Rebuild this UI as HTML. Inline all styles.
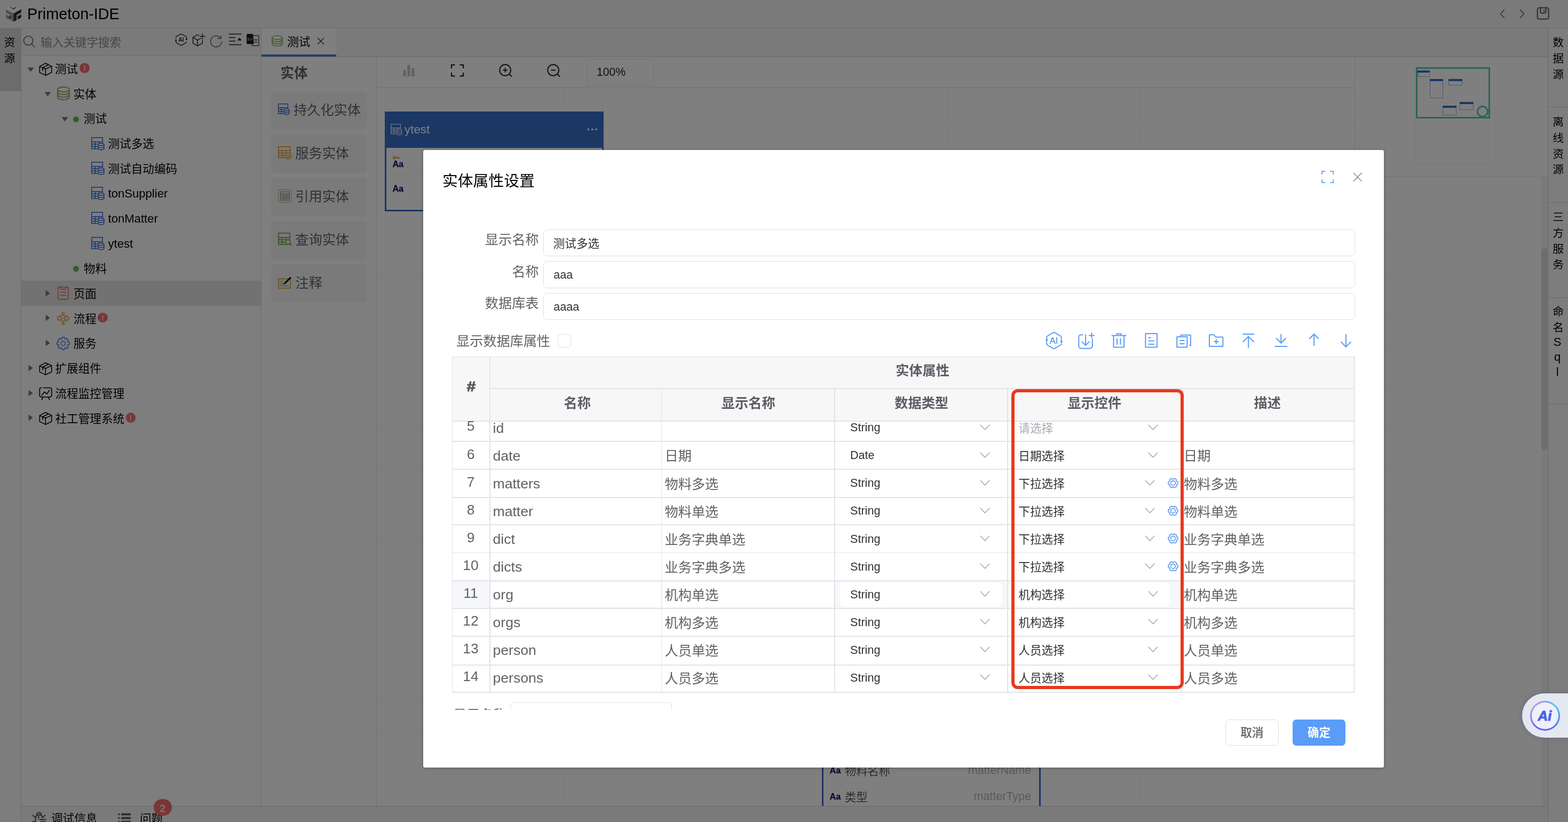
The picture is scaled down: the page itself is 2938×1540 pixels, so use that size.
<!DOCTYPE html>
<html lang="zh-CN">
<head>
<meta charset="utf-8">
<title>Primeton-IDE</title>
<style>
*{box-sizing:border-box;margin:0;padding:0}
html,body{width:2938px;height:1540px;overflow:hidden;background:#fff}
body{position:relative;font-family:"Liberation Sans","Noto Sans CJK SC",sans-serif;color:#000;-webkit-font-smoothing:antialiased}
#app{position:absolute;left:0;top:0;width:2938px;height:1540px;overflow:hidden;background:#fff}
#mask{position:absolute;left:0;top:0;width:2938px;height:1540px;background:rgba(0,0,0,.5)}
.t{position:absolute;white-space:nowrap}
.r{position:absolute}
.ic{position:absolute;display:block;overflow:visible}
#modal{position:absolute;left:793px;top:281px;width:1800px;height:1157px;background:#fff;border-radius:3.5px;overflow:hidden;box-shadow:0 1px 7px rgba(0,0,0,.28)}
#mc{position:absolute;left:0;top:0;width:2938px;height:1540px}
#app,#mc{will-change:transform}
.vt{position:absolute;writing-mode:vertical-rl;text-orientation:upright;font-size:20.8px;letter-spacing:8.9px;line-height:37px;white-space:nowrap;color:#000}
.vl{font-size:22px;letter-spacing:3px;margin-top:-4px}

</style>
</head>
<body>
<div id="app">
<div class="r" style="left:0px;top:0px;width:2938px;height:52px;background:#f5f5f5;"></div><div class="r" style="left:0px;top:52px;width:2938px;height:1px;background:#d9d9d9;"></div><svg class="ic" style="left:0px;top:0px" width="52" height="52" viewBox="0 0 52 52" fill="none" ><path d="M11 17.5 L25 9.6 L39.7 17.3 L25.4 25.2 Z" fill="#fdfdfd"/><path d="M19.1 12.1 L25 15.4 L25.2 18.1 L19.1 14.3 Z" fill="#8a8a8a"/><path d="M25 15.4 L30.8 12.7 L30.8 14.1 L25.2 18.1 Z" fill="#585858"/><path d="M11 17.5 L25.4 25.2 L25.4 40.8 L20 37.9 L20 28.5 L11 23.5 Z" fill="#a0a0a0"/><path d="M25.4 25.2 L39.7 17.3 L39.7 23.5 L30.8 28.3 L30.8 37.9 L25.4 40.8 Z" fill="#303030"/><path d="M11 27 L16.9 30 L16.9 36.6 L11 33.5 Z" fill="#a2a2a2"/><path d="M16.9 30 L20 28.5 L20 34.9 L16.9 36.6 Z" fill="#5c5c5c"/><path d="M31.2 28.7 L33.9 30 L33.9 36.2 L31.2 37.6 Z" fill="#a8a8a8"/><path d="M33.9 30 L39.7 27 L39.7 33.1 L33.9 36.2 Z" fill="#262626"/></svg><div class="t" style="top:6.00px;font-size:28.8px;line-height:40px;color:#000;left:51px;">Primeton-IDE</div><svg class="ic" style="left:2805px;top:12px" width="20" height="28" viewBox="2805 12 20 28" fill="none"><path d="M2818.4 18.6 L2811.7 25.9 L2818.4 33.2" stroke="#5e5e5e" stroke-width="1.5" stroke-linecap="square"/></svg><svg class="ic" style="left:2842px;top:12px" width="20" height="28" viewBox="2842 12 20 28" fill="none"><path d="M2848.7 18.6 L2855.4 25.9 L2848.7 33.2" stroke="#5e5e5e" stroke-width="1.5" stroke-linecap="square"/></svg><svg class="ic" style="left:2876px;top:10px" width="30" height="30" viewBox="2876 10 30 30" fill="none"><rect x="2880.7" y="14.5" width="21" height="21.3" rx="3.6" stroke="#5a5a5a" stroke-width="2.1"/><path d="M2886.3 14.6 V21.6 C2886.3 23.3 2887.6 24.6 2889.3 24.6 H2893.5 C2895.2 24.6 2896.5 23.3 2896.5 21.6 V14.6" stroke="#5a5a5a" stroke-width="2.1"/><path d="M2892.9 18.3 V21.4" stroke="#5a5a5a" stroke-width="1.7" stroke-linecap="round"/></svg><div class="r" style="left:0px;top:53px;width:39px;height:1487px;background:#fafafa;"></div><div class="r" style="left:0px;top:53px;width:39px;height:118px;background:#d8d8d8;"></div><div class="vt" style="left:-2.0px;top:68.6px">资源</div><div class="r" style="left:39px;top:53px;width:1px;height:1487px;background:#d4d4d4;"></div><div class="r" style="left:40px;top:53px;width:449px;height:1457px;background:#fcfcfc;"></div><div class="r" style="left:40px;top:53px;width:449px;height:51px;background:#f5f5f5;"></div><div class="r" style="left:40px;top:104px;width:449px;height:1px;background:#d9d9d9;"></div><div class="r" style="left:489px;top:53px;width:1px;height:1457px;background:#d4d4d4;"></div><svg class="ic" style="left:43px;top:66px" width="23" height="23" viewBox="0 0 23 23" fill="none" ><circle cx="10" cy="10" r="8.6" stroke="#5a5a5a" stroke-width="1.5"/><path d="M16.2 16.4 L22 22.2" stroke="#5a5a5a" stroke-width="1.5" stroke-linecap="round"/></svg><div class="t" style="top:63.80px;font-size:21.6px;line-height:32px;color:#8c8c8c;left:76px;">输入关键字搜索</div><svg class="ic" style="left:325px;top:58px" width="30" height="34" viewBox="325 58 30 34" fill="none"><g stroke="#222" stroke-width="1.35" stroke-linecap="round" stroke-linejoin="round"><path d="M329.8 71.4 V69.9 C329.8 69.2 330.2 68.6 330.8 68.2 L338.5 63.8 C339.1 63.4 339.9 63.4 340.5 63.8 L348.2 68.2 C348.8 68.6 349.2 69.2 349.2 69.9 V73.4"/><path d="M349.2 78.2 V78.6 C349.2 79.3 348.8 79.9 348.2 80.3 L340.5 84.7 C339.9 85.1 339.1 85.1 338.5 84.7 L330.8 80.3 C330.2 79.9 329.8 79.3 329.8 78.6 V75.4"/></g><circle cx="329.5" cy="75.3" r="1.5" fill="#222"/><circle cx="349.6" cy="73.6" r="1.5" fill="#222"/><text x="339.4" y="78.1" font-size="10.4" font-weight="700" text-anchor="middle" fill="#222" font-family="Liberation Sans, sans-serif">AI</text></svg><svg class="ic" style="left:358px;top:60px" width="30" height="30" viewBox="358 60 30 30" fill="none"><g stroke="#222" stroke-width="1.4" stroke-linecap="round" stroke-linejoin="round"><path d="M372.6 66.4 L370 65 L361.6 69.9 V81.2 L370 85.8 L379.4 80.9 V75.6"/><path d="M361.6 69.9 L370 75.2 L376 71.9"/><path d="M370 75.2 V85.8"/><path d="M374.4 68.3 H384"/><path d="M379.2 63.4 V73.4"/></g></svg><svg class="ic" style="left:392px;top:62px" width="28" height="30" viewBox="392 62 28 30" fill="none"><g stroke="#555" stroke-width="1.35" stroke-linecap="round" stroke-linejoin="round"><path d="M412.5 70.4 A10.4 10.4 0 1 0 415.3 78.3"/><path d="M414.1 67.4 V72.2 H408.4"/></g></svg><svg class="ic" style="left:427px;top:60px" width="28" height="28" viewBox="427 60 28 28" fill="none"><g stroke="#222" stroke-width="1.55"><path d="M429 63.7 H452.2"/><path d="M429 70.5 H441"/><path d="M429 77 H441"/><path d="M429 83.7 H452.2"/></g><path d="M445.3 75.4 L448.6 71.3 Q448.8 71.1 449 71.3 L452.2 75.4 Z" fill="#222" stroke="#222" stroke-width="0.8" stroke-linejoin="round"/></svg><svg class="ic" style="left:460px;top:60px" width="28" height="30" viewBox="460 60 28 30" fill="none"><rect x="472.4" y="66.6" width="12.4" height="19" stroke="#333" stroke-width="1.2"/><text x="479.3" y="80.4" font-size="8.6" text-anchor="middle" fill="#333" font-family="Noto Sans CJK SC, sans-serif">文</text><path d="M462.2 65 C462.2 64.1 462.9 63.4 463.8 63.4 H472.6 C473.3 63.4 473.9 63.9 474 64.6 L475.6 80.6 C475.7 81.7 474.9 82.6 473.8 82.6 H463.8 C462.9 82.6 462.2 81.9 462.2 81 Z" fill="#1c1c1c"/><text x="468.6" y="76" font-size="7.6" text-anchor="middle" fill="#d8d8d8" font-family="Liberation Sans, sans-serif">En</text></svg><div class="r" style="left:40px;top:526.0300000000001px;width:449px;height:46.8px;background:#e4e4e4;"></div><svg class="ic" style="left:51px;top:125.5px" width="13" height="9" viewBox="0 0 13 9" fill="none" ><path d="M0.4 0.6 H12.6 L6.5 8.6 Z" fill="#777"/></svg><svg class="ic" style="left:70px;top:113.5px" width="30" height="30" viewBox="0 0 30 30" fill="none" ><g stroke="#000" stroke-width="1.5" stroke-linejoin="round" stroke-linecap="round" transform="translate(0,0)"><path d="M15.3 4.5 L26.7 10.1 V21.8 L15.3 27.2 L4.3 21.8 V10.6 Z"/><path d="M4.3 10.6 L15.3 15.2 L26.7 10.1"/><path d="M15.3 15.2 V27.2"/><path d="M20.9 7.3 L9.9 12.9 V17.9" stroke-width="1.7"/></g></svg><div class="t" style="top:113.80px;font-size:21.6px;line-height:32px;color:#000;left:103.0px;">测试</div><div class="r" style="left:149.1px;top:118.2px;width:18.6px;height:18.6px;border-radius:50%;background:#f56c6c"></div><div class="t" style="top:118.20px;font-size:13.6px;line-height:19px;color:#f3d6d6;left:149.1px;font-weight:700;width:18.6px;text-align:center;-webkit-text-stroke:0.3px #f3d6d6;">!</div><svg class="ic" style="left:83px;top:172.27px" width="13" height="9" viewBox="0 0 13 9" fill="none" ><path d="M0.4 0.6 H12.6 L6.5 8.6 Z" fill="#777"/></svg><svg class="ic" style="left:106.5px;top:162.27px" width="24" height="26" viewBox="0 0 24 24" fill="none" preserveAspectRatio="none"><g stroke="#6aa84f" stroke-width="1.5" stroke-linecap="round" vector-effect="non-scaling-stroke"><ellipse cx="12" cy="5.2" rx="11" ry="4.2"/><path d="M1 5.2 V18.8 C1 21.1 5.9 23 12 23 C18.1 23 23 21.1 23 18.8 V5.2"/><path d="M1 9.8 C1 12.1 5.9 14 12 14 C18.1 14 23 12.1 23 9.8"/><path d="M1 14.3 C1 16.6 5.9 18.5 12 18.5 C18.1 18.5 23 16.6 23 14.3"/></g><circle cx="19" cy="11.4" r="0.8" fill="#6aa84f"/><circle cx="19" cy="15.9" r="0.8" fill="#6aa84f"/><circle cx="19" cy="20.3" r="0.8" fill="#6aa84f"/></svg><div class="t" style="top:160.57px;font-size:21.6px;line-height:32px;color:#000;left:137.5px;">实体</div><svg class="ic" style="left:115px;top:219.04000000000002px" width="13" height="9" viewBox="0 0 13 9" fill="none" ><path d="M0.4 0.6 H12.6 L6.5 8.6 Z" fill="#777"/></svg><div class="r" style="left:137px;top:217.54000000000002px;width:11px;height:11px;border-radius:50%;background:#74b552"></div><div class="t" style="top:207.34px;font-size:21.6px;line-height:32px;color:#000;left:156.8px;">测试</div><svg class="ic" style="left:171px;top:256.51px" width="24.6" height="24.6" viewBox="0 0 24 24" fill="none" ><g stroke="#2c66d0" stroke-width="1.45" fill="none"><rect x="0.725" y="0.725" width="19.95" height="20.55"/><path d="M0.725 8.6 H20.674999999999997"/><path d="M0.725 12.82 H20.674999999999997"/><path d="M0.725 17.05 H20.674999999999997"/><path d="M7.06 8.6 V21.275"/><path d="M13.70 8.6 V21.275"/></g><path d="M12.4 13.6 C12.4 11.9 14.9 10.9 18 10.9 C21.1 10.9 23.6 11.9 23.6 13.6 V21 C23.6 22.6 21.1 23.6 18 23.6 C14.9 23.6 12.4 22.6 12.4 21 Z" fill="#fcfcfc" stroke="#fcfcfc" stroke-width="1.6"/><g stroke="#2c66d0" stroke-width="1.35" fill="none"><ellipse cx="18" cy="13.4" rx="5.3" ry="2.2"/><path d="M12.7 13.4 V21 C12.7 22.2 15.1 23.2 18 23.2 C20.9 23.2 23.3 22.2 23.3 21 V13.4"/><path d="M12.7 17.2 C12.7 18.4 15.1 19.4 18 19.4 C20.9 19.4 23.3 18.4 23.3 17.2"/></g></svg><div class="t" style="top:254.11px;font-size:21.6px;line-height:32px;color:#000;left:202.5px;">测试多选</div><svg class="ic" style="left:171px;top:303.28000000000003px" width="24.6" height="24.6" viewBox="0 0 24 24" fill="none" ><g stroke="#2c66d0" stroke-width="1.45" fill="none"><rect x="0.725" y="0.725" width="19.95" height="20.55"/><path d="M0.725 8.6 H20.674999999999997"/><path d="M0.725 12.82 H20.674999999999997"/><path d="M0.725 17.05 H20.674999999999997"/><path d="M7.06 8.6 V21.275"/><path d="M13.70 8.6 V21.275"/></g><path d="M12.4 13.6 C12.4 11.9 14.9 10.9 18 10.9 C21.1 10.9 23.6 11.9 23.6 13.6 V21 C23.6 22.6 21.1 23.6 18 23.6 C14.9 23.6 12.4 22.6 12.4 21 Z" fill="#fcfcfc" stroke="#fcfcfc" stroke-width="1.6"/><g stroke="#2c66d0" stroke-width="1.35" fill="none"><ellipse cx="18" cy="13.4" rx="5.3" ry="2.2"/><path d="M12.7 13.4 V21 C12.7 22.2 15.1 23.2 18 23.2 C20.9 23.2 23.3 22.2 23.3 21 V13.4"/><path d="M12.7 17.2 C12.7 18.4 15.1 19.4 18 19.4 C20.9 19.4 23.3 18.4 23.3 17.2"/></g></svg><div class="t" style="top:300.88px;font-size:21.6px;line-height:32px;color:#000;left:202.5px;">测试自动编码</div><svg class="ic" style="left:171px;top:350.05px" width="24.6" height="24.6" viewBox="0 0 24 24" fill="none" ><g stroke="#2c66d0" stroke-width="1.45" fill="none"><rect x="0.725" y="0.725" width="19.95" height="20.55"/><path d="M0.725 8.6 H20.674999999999997"/><path d="M0.725 12.82 H20.674999999999997"/><path d="M0.725 17.05 H20.674999999999997"/><path d="M7.06 8.6 V21.275"/><path d="M13.70 8.6 V21.275"/></g><path d="M12.4 13.6 C12.4 11.9 14.9 10.9 18 10.9 C21.1 10.9 23.6 11.9 23.6 13.6 V21 C23.6 22.6 21.1 23.6 18 23.6 C14.9 23.6 12.4 22.6 12.4 21 Z" fill="#fcfcfc" stroke="#fcfcfc" stroke-width="1.6"/><g stroke="#2c66d0" stroke-width="1.35" fill="none"><ellipse cx="18" cy="13.4" rx="5.3" ry="2.2"/><path d="M12.7 13.4 V21 C12.7 22.2 15.1 23.2 18 23.2 C20.9 23.2 23.3 22.2 23.3 21 V13.4"/><path d="M12.7 17.2 C12.7 18.4 15.1 19.4 18 19.4 C20.9 19.4 23.3 18.4 23.3 17.2"/></g></svg><div class="t" style="top:347.15px;font-size:22.1px;line-height:32px;color:#000;left:202.5px;">tonSupplier</div><svg class="ic" style="left:171px;top:396.82px" width="24.6" height="24.6" viewBox="0 0 24 24" fill="none" ><g stroke="#2c66d0" stroke-width="1.45" fill="none"><rect x="0.725" y="0.725" width="19.95" height="20.55"/><path d="M0.725 8.6 H20.674999999999997"/><path d="M0.725 12.82 H20.674999999999997"/><path d="M0.725 17.05 H20.674999999999997"/><path d="M7.06 8.6 V21.275"/><path d="M13.70 8.6 V21.275"/></g><path d="M12.4 13.6 C12.4 11.9 14.9 10.9 18 10.9 C21.1 10.9 23.6 11.9 23.6 13.6 V21 C23.6 22.6 21.1 23.6 18 23.6 C14.9 23.6 12.4 22.6 12.4 21 Z" fill="#fcfcfc" stroke="#fcfcfc" stroke-width="1.6"/><g stroke="#2c66d0" stroke-width="1.35" fill="none"><ellipse cx="18" cy="13.4" rx="5.3" ry="2.2"/><path d="M12.7 13.4 V21 C12.7 22.2 15.1 23.2 18 23.2 C20.9 23.2 23.3 22.2 23.3 21 V13.4"/><path d="M12.7 17.2 C12.7 18.4 15.1 19.4 18 19.4 C20.9 19.4 23.3 18.4 23.3 17.2"/></g></svg><div class="t" style="top:393.92px;font-size:22.1px;line-height:32px;color:#000;left:202.5px;">tonMatter</div><svg class="ic" style="left:171px;top:443.59000000000003px" width="24.6" height="24.6" viewBox="0 0 24 24" fill="none" ><g stroke="#2c66d0" stroke-width="1.45" fill="none"><rect x="0.725" y="0.725" width="19.95" height="20.55"/><path d="M0.725 8.6 H20.674999999999997"/><path d="M0.725 12.82 H20.674999999999997"/><path d="M0.725 17.05 H20.674999999999997"/><path d="M7.06 8.6 V21.275"/><path d="M13.70 8.6 V21.275"/></g><path d="M12.4 13.6 C12.4 11.9 14.9 10.9 18 10.9 C21.1 10.9 23.6 11.9 23.6 13.6 V21 C23.6 22.6 21.1 23.6 18 23.6 C14.9 23.6 12.4 22.6 12.4 21 Z" fill="#fcfcfc" stroke="#fcfcfc" stroke-width="1.6"/><g stroke="#2c66d0" stroke-width="1.35" fill="none"><ellipse cx="18" cy="13.4" rx="5.3" ry="2.2"/><path d="M12.7 13.4 V21 C12.7 22.2 15.1 23.2 18 23.2 C20.9 23.2 23.3 22.2 23.3 21 V13.4"/><path d="M12.7 17.2 C12.7 18.4 15.1 19.4 18 19.4 C20.9 19.4 23.3 18.4 23.3 17.2"/></g></svg><div class="t" style="top:440.69px;font-size:22.1px;line-height:32px;color:#000;left:202.5px;">ytest</div><div class="r" style="left:137px;top:498.16px;width:11px;height:11px;border-radius:50%;background:#74b552"></div><div class="t" style="top:487.96px;font-size:21.6px;line-height:32px;color:#000;left:156.8px;">物料</div><svg class="ic" style="left:85px;top:542.5300000000001px" width="9" height="13" viewBox="0 0 9 13" fill="none" ><path d="M0.6 0.4 V12.6 L8.6 6.5 Z" fill="#777"/></svg><svg class="ic" style="left:108.3px;top:537.1300000000001px" width="20.6" height="24.5" viewBox="0 0 20.6 24.5" fill="none" ><g stroke="#f05a5a" stroke-width="1.4" stroke-linejoin="round" stroke-linecap="round"><rect x="0.7" y="0.7" width="19.2" height="23.1" rx="2.6"/><path d="M4.9 0.9 V3.4 C4.9 4.2 5.5 4.8 6.3 4.8 H14.3 C15.1 4.8 15.7 4.2 15.7 3.4 V0.9"/><path d="M5.2 10.4 H15.6"/><path d="M5.2 16.4 H15.6"/></g></svg><div class="t" style="top:534.73px;font-size:21.6px;line-height:32px;color:#000;left:137.7px;">页面</div><svg class="ic" style="left:85px;top:589.3000000000001px" width="9" height="13" viewBox="0 0 9 13" fill="none" ><path d="M0.6 0.4 V12.6 L8.6 6.5 Z" fill="#777"/></svg><svg class="ic" style="left:107.3px;top:584.0px" width="22.6" height="24.6" viewBox="0 0 22.6 24.6" fill="none" ><g stroke="#e09a2c" stroke-width="1.35"><circle cx="11.3" cy="2.7" r="2"/><circle cx="11.3" cy="22" r="2"/><rect x="0.7" y="9.7" width="7.6" height="5.2"/><rect x="14.3" y="9.7" width="7.6" height="5.2"/><path d="M11.3 4.7 V7.2"/><path d="M11.3 17.4 V20"/><path d="M8.3 12.3 H14.3"/><path d="M4.4 9.7 V7.2 H18.2 V9.7"/><path d="M4.4 14.9 V17.4 H18.2 V14.9"/></g></svg><div class="t" style="top:581.50px;font-size:21.6px;line-height:32px;color:#000;left:137.7px;">流程</div><div class="r" style="left:183.29999999999998px;top:585.9000000000001px;width:18.6px;height:18.6px;border-radius:50%;background:#f56c6c"></div><div class="t" style="top:585.90px;font-size:13.6px;line-height:19px;color:#f3d6d6;left:183.29999999999998px;font-weight:700;width:18.6px;text-align:center;-webkit-text-stroke:0.3px #f3d6d6;">!</div><svg class="ic" style="left:85px;top:636.07px" width="9" height="13" viewBox="0 0 9 13" fill="none" ><path d="M0.6 0.4 V12.6 L8.6 6.5 Z" fill="#777"/></svg><svg class="ic" style="left:105.2px;top:630.1700000000001px" width="26.8" height="26.8" viewBox="0 0 24 24" fill="none" ><path d="M22.43 10.10 L22.43 13.90 L20.13 14.12 L19.25 16.25 L20.72 18.03 L18.03 20.72 L16.25 19.25 L14.12 20.13 L13.90 22.43 L10.10 22.43 L9.88 20.13 L7.75 19.25 L5.97 20.72 L3.28 18.03 L4.75 16.25 L3.87 14.12 L1.57 13.90 L1.57 10.10 L3.87 9.88 L4.75 7.75 L3.28 5.97 L5.97 3.28 L7.75 4.75 L9.88 3.87 L10.10 1.57 L13.90 1.57 L14.12 3.87 L16.25 4.75 L18.03 3.28 L20.72 5.97 L19.25 7.75 L20.13 9.88 Z" stroke="#2f72e0" stroke-width="1.25" stroke-linejoin="round"/><circle cx="12" cy="12" r="3.7" stroke="#2f72e0" stroke-width="1.25"/></svg><div class="t" style="top:628.27px;font-size:21.6px;line-height:32px;color:#000;left:137.7px;">服务</div><svg class="ic" style="left:52.5px;top:682.84px" width="9" height="13" viewBox="0 0 9 13" fill="none" ><path d="M0.6 0.4 V12.6 L8.6 6.5 Z" fill="#777"/></svg><svg class="ic" style="left:70px;top:674.74px" width="30" height="30" viewBox="0 0 30 30" fill="none" ><g stroke="#000" stroke-width="1.5" stroke-linejoin="round" stroke-linecap="round" transform="translate(0,0)"><path d="M15.3 4.5 L26.7 10.1 V21.8 L15.3 27.2 L4.3 21.8 V10.6 Z"/><path d="M4.3 10.6 L15.3 15.2 L26.7 10.1"/><path d="M15.3 15.2 V27.2"/><path d="M20.9 7.3 L9.9 12.9 V17.9" stroke-width="1.7"/></g></svg><div class="t" style="top:675.04px;font-size:21.6px;line-height:32px;color:#000;left:103.5px;">扩展组件</div><svg class="ic" style="left:52.5px;top:729.61px" width="9" height="13" viewBox="0 0 9 13" fill="none" ><path d="M0.6 0.4 V12.6 L8.6 6.5 Z" fill="#777"/></svg><svg class="ic" style="left:70px;top:721.51px" width="30" height="30" viewBox="0 0 30 30" fill="none" ><g stroke="#000" stroke-width="1.6" stroke-linejoin="round" stroke-linecap="round"><path d="M7.6 4.5 H7.3 C5.6 4.5 4.3 5.8 4.3 7.5 V18.8 C4.3 20.5 5.6 21.8 7.3 21.8 H23.7 C25.4 21.8 26.7 20.5 26.7 18.8 V7.5 C26.7 5.8 25.4 4.5 23.7 4.5 H11.5"/><path d="M8.3 18.6 L13.3 12.2 L18.1 16.2 L22.4 9"/><path d="M10.1 22 L8.3 27.2"/><path d="M20.5 22 L22.9 27.2"/></g></svg><div class="t" style="top:721.81px;font-size:21.6px;line-height:32px;color:#000;left:103.5px;">流程监控管理</div><svg class="ic" style="left:52.5px;top:776.3800000000001px" width="9" height="13" viewBox="0 0 9 13" fill="none" ><path d="M0.6 0.4 V12.6 L8.6 6.5 Z" fill="#777"/></svg><svg class="ic" style="left:70px;top:768.2800000000001px" width="30" height="30" viewBox="0 0 30 30" fill="none" ><g stroke="#000" stroke-width="1.5" stroke-linejoin="round" stroke-linecap="round" transform="translate(0,0)"><path d="M15.3 4.5 L26.7 10.1 V21.8 L15.3 27.2 L4.3 21.8 V10.6 Z"/><path d="M4.3 10.6 L15.3 15.2 L26.7 10.1"/><path d="M15.3 15.2 V27.2"/><path d="M20.9 7.3 L9.9 12.9 V17.9" stroke-width="1.7"/></g></svg><div class="t" style="top:768.58px;font-size:21.6px;line-height:32px;color:#000;left:103.5px;">社工管理系统</div><div class="r" style="left:235.50000000000003px;top:772.9800000000001px;width:18.6px;height:18.6px;border-radius:50%;background:#f56c6c"></div><div class="t" style="top:772.98px;font-size:13.6px;line-height:19px;color:#f3d6d6;left:235.50000000000003px;font-weight:700;width:18.6px;text-align:center;-webkit-text-stroke:0.3px #f3d6d6;">!</div><div class="r" style="left:490px;top:53px;width:2410px;height:53px;background:#f5f5f5;"></div><div class="r" style="left:490px;top:106px;width:2410px;height:1px;background:#d4d4d4;"></div><div class="r" style="left:490px;top:53px;width:140px;height:50px;background:#fff;"></div><div class="r" style="left:490px;top:102px;width:140px;height:4px;background:#4c7dc8;"></div><svg class="ic" style="left:508.5px;top:66px" width="21" height="21" viewBox="0 0 24 24" fill="none" preserveAspectRatio="none"><g stroke="#6aa84f" stroke-width="1.5" stroke-linecap="round" vector-effect="non-scaling-stroke"><ellipse cx="12" cy="5.2" rx="11" ry="4.2"/><path d="M1 5.2 V18.8 C1 21.1 5.9 23 12 23 C18.1 23 23 21.1 23 18.8 V5.2"/><path d="M1 9.8 C1 12.1 5.9 14 12 14 C18.1 14 23 12.1 23 9.8"/><path d="M1 14.3 C1 16.6 5.9 18.5 12 18.5 C18.1 18.5 23 16.6 23 14.3"/></g><circle cx="19" cy="11.4" r="0.8" fill="#6aa84f"/><circle cx="19" cy="15.9" r="0.8" fill="#6aa84f"/><circle cx="19" cy="20.3" r="0.8" fill="#6aa84f"/></svg><div class="t" style="top:62.50px;font-size:21.8px;line-height:32px;color:#000;left:538px;">测试</div><svg class="ic" style="left:594px;top:70px" width="14" height="14" viewBox="0 0 14 14" fill="none" ><path d="M1 1 L13 13 M13 1 L1 13" stroke="#333" stroke-width="1.4"/></svg><div class="r" style="left:490px;top:107px;width:215px;height:1403px;background:#fff;"></div><div class="r" style="left:705px;top:107px;width:1px;height:1403px;background:#dcdcdc;"></div><div class="t" style="top:118.50px;font-size:25.6px;line-height:36px;color:#606266;left:525.5px;font-weight:700;">实体</div><div class="r" style="left:508px;top:170.7px;width:180px;height:72.5px;border-radius:7px;background:#f5f5f5"></div><svg class="ic" style="left:520.6px;top:193.79999999999998px" width="21.4" height="21.4" viewBox="0 0 24 24" fill="none" ><g stroke="#2c66d0" stroke-width="1.5" fill="none"><rect x="0.75" y="0.75" width="19.9" height="20.5"/><path d="M0.75 8.6 H20.65"/><path d="M0.75 12.82 H20.65"/><path d="M0.75 17.03 H20.65"/><path d="M7.06 8.6 V21.25"/><path d="M13.70 8.6 V21.25"/></g><path d="M12.4 13.6 C12.4 11.9 14.9 10.9 18 10.9 C21.1 10.9 23.6 11.9 23.6 13.6 V21 C23.6 22.6 21.1 23.6 18 23.6 C14.9 23.6 12.4 22.6 12.4 21 Z" fill="#f5f5f5" stroke="#f5f5f5" stroke-width="1.6"/><g stroke="#2c66d0" stroke-width="1.40" fill="none"><ellipse cx="18" cy="13.4" rx="5.3" ry="2.2"/><path d="M12.7 13.4 V21 C12.7 22.2 15.1 23.2 18 23.2 C20.9 23.2 23.3 22.2 23.3 21 V13.4"/><path d="M12.7 17.2 C12.7 18.4 15.1 19.4 18 19.4 C20.9 19.4 23.3 18.4 23.3 17.2"/></g></svg><div class="t" style="top:187.70px;font-size:25.2px;line-height:36px;color:#606266;left:550px;">持久化实体</div><div class="r" style="left:508px;top:251.7px;width:180px;height:72.5px;border-radius:7px;background:#f5f5f5"></div><svg class="ic" style="left:520.6px;top:273.99999999999994px" width="25" height="25" viewBox="0 0 25 25" fill="none" ><g stroke="#e09a2c" stroke-width="1.5" fill="none"><rect x="0.75" y="0.75" width="21.9" height="20.9"/><path d="M0.75 8.2 H22.65"/><path d="M0.75 12.68 H22.65"/><path d="M0.75 17.17 H22.65"/><path d="M7.72 8.2 V21.65"/><path d="M14.98 8.2 V21.65"/></g><circle cx="18.8" cy="17.8" r="7.1" fill="#f5f5f5"/><path d="M24.98 16.57 L24.98 19.03 L23.53 19.08 L23.05 20.24 L24.04 21.30 L22.30 23.04 L21.24 22.05 L20.08 22.53 L20.03 23.98 L17.57 23.98 L17.52 22.53 L16.36 22.05 L15.30 23.04 L13.56 21.30 L14.55 20.24 L14.07 19.08 L12.62 19.03 L12.62 16.57 L14.07 16.52 L14.55 15.36 L13.56 14.30 L15.30 12.56 L16.36 13.55 L17.52 13.07 L17.57 11.62 L20.03 11.62 L20.08 13.07 L21.24 13.55 L22.30 12.56 L24.04 14.30 L23.05 15.36 L23.53 16.52 Z" stroke="#e09a2c" stroke-width="1.25" fill="none" stroke-linejoin="round"/><circle cx="18.8" cy="17.8" r="2" stroke="#e09a2c" stroke-width="1.25" fill="none"/></svg><div class="t" style="top:268.70px;font-size:25.2px;line-height:36px;color:#606266;left:553.3px;">服务实体</div><div class="r" style="left:508px;top:332.7px;width:180px;height:72.5px;border-radius:7px;background:#f5f5f5"></div><svg class="ic" style="left:520.6px;top:354.59999999999997px" width="25.4" height="25.4" viewBox="0 0 25.4 25.4" fill="none" ><rect x="0.7" y="0.7" width="24" height="23.4" rx="2.6" stroke="#a39a88" stroke-width="1.3" stroke-dasharray="4.3 2.3" fill="none"/><g transform="translate(3.9,3.8)"><g stroke="#a39a88" stroke-width="1.3" fill="none"><rect x="0.65" y="0.65" width="16.7" height="15.899999999999999"/><path d="M0.65 4.4 H17.35"/><path d="M0.65 7.44 H17.35"/><path d="M0.65 10.47 H17.35"/><path d="M0.65 13.51 H17.35"/><path d="M6.48 4.4 V16.55"/><path d="M11.88 4.4 V16.55"/></g></g></svg><div class="t" style="top:349.70px;font-size:25.2px;line-height:36px;color:#606266;left:553.3px;">引用实体</div><div class="r" style="left:508px;top:413.7px;width:180px;height:72.5px;border-radius:7px;background:#f5f5f5"></div><svg class="ic" style="left:520.6px;top:435.9px" width="25" height="25" viewBox="0 0 25 25" fill="none" ><g stroke="#5b9e34" stroke-width="1.5" fill="none"><rect x="0.75" y="0.75" width="21.3" height="21.1"/><path d="M0.75 8.8 H22.05"/><path d="M0.75 13.15 H22.05"/><path d="M0.75 17.50 H22.05"/><path d="M7.52 8.8 V21.85"/><path d="M14.59 8.8 V21.85"/></g><circle cx="18.8" cy="17.4" r="5.4" fill="#f5f5f5"/><circle cx="18.8" cy="17.4" r="4.2" stroke="#5b9e34" stroke-width="1.5" fill="none"/><path d="M21.9 20.6 L24.2 23.2" stroke="#5b9e34" stroke-width="1.9" stroke-linecap="round"/></svg><div class="t" style="top:430.70px;font-size:25.2px;line-height:36px;color:#606266;left:553.3px;">查询实体</div><div class="r" style="left:508px;top:494.7px;width:180px;height:72.5px;border-radius:7px;background:#f5f5f5"></div><svg class="ic" style="left:520.6px;top:517.6px" width="26" height="26" viewBox="0 0 26 26" fill="none" ><g stroke="#d9a11e" stroke-width="1.6" fill="none"><rect x="0.8" y="4.4" width="22.2" height="17.4"/><path d="M3.6 9.2 H10.6"/><path d="M3.6 13.2 H11.5"/><path d="M3.6 17.2 H20.4"/></g><path d="M9.9 14.9 L11.8 11.3 L22.6 0.6 L25.0 3.1 L14.0 13.8 Z" fill="#1a1a1a"/></svg><div class="t" style="top:511.70px;font-size:25.2px;line-height:36px;color:#606266;left:553.5px;">注释</div><div class="r" id="canvas" style="left:706px;top:107px;width:2194px;height:1403px;background-color:#fff;background-image:linear-gradient(to right,#f6f6f6 1.5px,transparent 1.5px),linear-gradient(to bottom,#f6f6f6 1.5px,transparent 1.5px);background-size:72px 72px;background-position:62px 118px"></div><div class="r" style="left:706px;top:107px;width:1832px;height:57px;background:#fff;"></div><div class="r" style="left:706px;top:164px;width:1832px;height:1px;background:#e0e0e0;"></div><div class="r" style="left:2538px;top:107px;width:1px;height:224px;background:#e4e4e4;"></div><svg class="ic" style="left:755px;top:121px" width="22" height="22" viewBox="0 0 22 22" fill="none" ><g fill="#c4c4c4"><rect x="0.4" y="10" width="5.2" height="12"/><rect x="8.4" y="0.6" width="5.2" height="21.4"/><rect x="16.4" y="6.4" width="5.2" height="15.6"/></g></svg><svg class="ic" style="left:845px;top:120px" width="24" height="24" viewBox="0 0 24 24" fill="none" ><g stroke="#222" stroke-width="2.2"><path d="M1 8 V1.6 H7.4"/><path d="M16.6 1.6 H23 V8"/><path d="M23 16 V22.4 H16.6"/><path d="M7.4 22.4 H1 V16"/></g></svg><svg class="ic" style="left:935px;top:120px" width="26" height="25" viewBox="0 0 26 25" fill="none" ><g stroke="#222" stroke-width="1.95"><circle cx="11.6" cy="11.4" r="10.4"/><path d="M19.2 18.8 L23.8 23.2" stroke-linecap="round"/><path d="M7.4 11.4 H15.8"/><path d="M11.6 7.2 V15.6"/></g></svg><svg class="ic" style="left:1025px;top:120px" width="26" height="25" viewBox="0 0 26 25" fill="none" ><g stroke="#222" stroke-width="1.95"><circle cx="11.6" cy="11.4" r="10.4"/><path d="M19.2 18.8 L23.8 23.2" stroke-linecap="round"/><path d="M7.4 11.4 H15.8"/></g></svg><div class="r" style="left:1099px;top:110px;width:126px;height:51px;border:1px solid #e4e4e4;border-radius:7px;background:#fff"></div><div class="t" style="top:119.50px;font-size:21.2px;line-height:30px;color:#222;left:1118px;">100%</div><div class="r" style="left:721px;top:209px;width:410px;height:187px;background:#fff;border:3px solid #376fc8"></div><div class="r" style="left:721px;top:209px;width:410px;height:68px;background:#376fc8;"></div><svg class="ic" style="left:731.6px;top:232.3px" width="21.3" height="21.3" viewBox="0 0 24 24" fill="none" ><g stroke="#e8eefc" stroke-width="1.4" fill="none"><rect x="0.7" y="0.7" width="20.0" height="20.6"/><path d="M0.7 8.6 H20.7"/><path d="M0.7 12.83 H20.7"/><path d="M0.7 17.07 H20.7"/><path d="M7.06 8.6 V21.3"/><path d="M13.70 8.6 V21.3"/></g><path d="M12.4 13.6 C12.4 11.9 14.9 10.9 18 10.9 C21.1 10.9 23.6 11.9 23.6 13.6 V21 C23.6 22.6 21.1 23.6 18 23.6 C14.9 23.6 12.4 22.6 12.4 21 Z" fill="#376fc8" stroke="#376fc8" stroke-width="1.6"/><g stroke="#e8eefc" stroke-width="1.30" fill="none"><ellipse cx="18" cy="13.4" rx="5.3" ry="2.2"/><path d="M12.7 13.4 V21 C12.7 22.2 15.1 23.2 18 23.2 C20.9 23.2 23.3 22.2 23.3 21 V13.4"/><path d="M12.7 17.2 C12.7 18.4 15.1 19.4 18 19.4 C20.9 19.4 23.3 18.4 23.3 17.2"/></g></svg><div class="t" style="top:228.00px;font-size:22.4px;line-height:30px;color:#fff;left:758px;">ytest</div><svg class="ic" style="left:1100px;top:240px" width="20" height="5" viewBox="0 0 20 5" fill="none" ><g fill="#e8eefc"><circle cx="2.4" cy="2.5" r="2.1"/><circle cx="9.8" cy="2.5" r="2.1"/><circle cx="17.2" cy="2.5" r="2.1"/></g></svg><div class="r" style="left:724px;top:327px;width:404px;height:1px;background:#f5f5f5;"></div><div class="r" style="left:724px;top:377.5px;width:404px;height:1px;background:#f5f5f5;"></div><div class="t" style="top:294.50px;font-size:16.2px;line-height:24px;color:#1a1a6e;left:735.4px;font-weight:700;-webkit-text-stroke:0.35px #1a1a6e;">Aa</div><div class="t" style="top:341.20px;font-size:16.2px;line-height:24px;color:#1a1a6e;left:735.4px;font-weight:700;-webkit-text-stroke:0.35px #1a1a6e;">Aa</div><svg class="ic" style="left:736px;top:291.5px" width="14" height="7" viewBox="0 0 14 7" fill="none" ><circle cx="3" cy="3.4" r="2.2" stroke="#e0a020" stroke-width="1.7"/><path d="M5 3.4 H13.4 M10 3.4 V5.4 M12.4 3.4 V5" stroke="#e0a020" stroke-width="1.7"/></svg><div class="r" style="left:1540px;top:1200px;width:410px;height:320px;background:#fff;border-left:3px solid #376fc8;border-right:3px solid #376fc8"></div><div class="r" style="left:1543px;top:1466px;width:404px;height:1px;background:#f5f5f5;"></div><div class="t" style="top:1431.00px;font-size:16.2px;line-height:24px;color:#1a1a6e;left:1554.6px;font-weight:700;-webkit-text-stroke:0.35px #1a1a6e;">Aa</div><div class="t" style="top:1430.00px;font-size:21.2px;line-height:30px;color:#5a5a5a;left:1583px;">物料名称</div><div class="t" style="top:1428.00px;font-size:21.5px;line-height:30px;color:#b4b4b4;right:1006px;">matterName</div><div class="t" style="top:1480.00px;font-size:16.2px;line-height:24px;color:#1a1a6e;left:1554.6px;font-weight:700;-webkit-text-stroke:0.35px #1a1a6e;">Aa</div><div class="t" style="top:1479.00px;font-size:21.2px;line-height:30px;color:#5a5a5a;left:1583px;">类型</div><div class="t" style="top:1477.00px;font-size:21.5px;line-height:30px;color:#b4b4b4;right:1006px;">matterType</div><div class="r" style="left:2539px;top:107px;width:361px;height:223px;background:#fff;"></div><div class="r" style="left:2539px;top:330px;width:361px;height:1px;background:#ececec;"></div><div class="r" style="left:2653px;top:126px;width:134px;height:180px;background:#fff;box-shadow:0 1px 6px rgba(0,0,0,.08)"></div><div class="r" style="left:2653px;top:126px;width:139px;height:96px;border:3px solid #5cc4b0;background:#fff"></div><div class="r" style="left:2656px;top:132px;width:23px;height:12px;border:1px solid #93abe3;background:#fff"></div><div class="r" style="left:2656px;top:132px;width:23px;height:4px;background:#376fc8;"></div><div class="r" style="left:2679px;top:148px;width:25px;height:36px;border:1px solid #93abe3;background:#fff"></div><div class="r" style="left:2679px;top:148px;width:25px;height:4px;background:#376fc8;"></div><div class="r" style="left:2714px;top:148px;width:26px;height:12px;border:1px solid #93abe3;background:#fff"></div><div class="r" style="left:2714px;top:148px;width:26px;height:4px;background:#376fc8;"></div><div class="r" style="left:2703px;top:198px;width:26px;height:18px;border:1px solid #93abe3;background:#fff"></div><div class="r" style="left:2703px;top:198px;width:26px;height:4px;background:#376fc8;"></div><div class="r" style="left:2735px;top:191px;width:26px;height:15px;border:1px solid #93abe3;background:#fff"></div><div class="r" style="left:2735px;top:191px;width:26px;height:4px;background:#376fc8;"></div><div class="r" style="left:2767px;top:198px;width:22px;height:22px;border:3px solid #5cc4b0;border-radius:50%"></div><div class="r" style="left:2888px;top:331px;width:12px;height:1179px;background:#f4f4f4;"></div><div class="r" style="left:2888px;top:465px;width:12px;height:378px;border-radius:6px;background:#dcdcdc"></div><div class="r" style="left:2900px;top:53px;width:1px;height:1487px;background:#d4d4d4;"></div><div class="r" style="left:2901px;top:53px;width:37px;height:1487px;background:#fafafa;"></div><div class="vt" style="left:2899.6px;top:69.3px">数据源</div><div class="r" style="left:2901px;top:200px;width:37px;height:1px;background:#d4d4d4;"></div><div class="vt" style="left:2899.6px;top:218.3px">离线资源</div><div class="r" style="left:2901px;top:379px;width:37px;height:1px;background:#d4d4d4;"></div><div class="vt" style="left:2899.6px;top:395.9px">三方服务</div><div class="r" style="left:2901px;top:557px;width:37px;height:1px;background:#d4d4d4;"></div><div class="vt" style="left:2899.6px;top:572.6px">命名<span class="vl">Sql</span></div><div class="r" style="left:2901px;top:756px;width:37px;height:1px;background:#d4d4d4;"></div><div class="r" style="left:40px;top:1510px;width:2860px;height:30px;background:#f5f5f5;"></div><div class="r" style="left:40px;top:1510px;width:2860px;height:1px;background:#d4d4d4;"></div><svg class="ic" style="left:59.5px;top:1521px" width="26" height="24" viewBox="0 0 26 24" fill="none" ><g stroke="#606060" stroke-width="2.2" fill="none" stroke-linecap="round"><path d="M6.6 23 V12.4 C6.6 8 9 5.4 13 5.4 C17 5.4 19.4 8 19.4 11"/><path d="M8.6 6.8 C8.6 3 10.4 1.4 13 1.4 C15.6 1.4 17.4 3 17.4 6.8"/><path d="M1.4 6.6 L6.4 10.6 M24.4 6.6 L19.6 10.4 M1 18.4 H6.4"/><path d="M12.4 7 V12"/><path d="M14.6 14.4 H25 M16.4 18.6 H25"/></g></svg><div class="t" style="top:1519.30px;font-size:21.6px;line-height:30px;color:#000;left:96px;">调试信息</div><svg class="ic" style="left:220px;top:1520px" width="28" height="24" viewBox="220 1520 28 24" fill="none"><g fill="#6a6a6a"><rect x="221" y="1523.7" width="3.6" height="3.6" rx="1.6"/><rect x="221" y="1530.7" width="3.6" height="3.6" rx="1.6"/><rect x="221" y="1537.7" width="3.6" height="3.6" rx="1.6"/></g><g fill="#5a5a5a"><rect x="226.9" y="1523.7" width="18.2" height="3.7" rx="1.2"/><rect x="226.9" y="1530.7" width="18.2" height="3.7" rx="1.2"/><rect x="226.9" y="1537.7" width="18.2" height="3.7" rx="1.2"/></g></svg><div class="t" style="top:1519.30px;font-size:21.6px;line-height:30px;color:#000;left:262px;">问题</div><div class="r" style="left:287.8px;top:1497.2px;width:34px;height:31px;border-radius:16px;background:#f56c6c"></div><div class="t" style="top:1499.40px;font-size:18.4px;line-height:31px;color:#fff;left:287.6px;width:34px;text-align:center;opacity:.9;-webkit-text-stroke:0.5px #fff;">2</div>
</div>
<div id="mask"></div>
<div id="modal"></div><div id="mc"><div class="t" style="top:318.50px;font-size:28.8px;line-height:40px;color:#000;left:829px;">实体属性设置</div><svg class="ic" style="left:2476px;top:319.6px" width="23.4" height="23" viewBox="0 0 25 25" fill="none" ><g stroke="#5a9cf8" stroke-width="1.8"><path d="M1 7.6 V1 H7.6"/><path d="M17.4 1 H24 V7.6"/><path d="M24 17.4 V24 H17.4"/><path d="M7.6 24 H1 V17.4"/></g></svg><svg class="ic" style="left:2534.5px;top:323.4px" width="17.4" height="17.4" viewBox="0 0 19 19" fill="none" ><path d="M0.8 0.8 L18.2 18.2 M18.2 0.8 L0.8 18.2" stroke="#8a8a8a" stroke-width="1.6"/></svg><div class="t" style="top:431.40px;font-size:25.2px;line-height:36px;color:#606266;right:1928.5px;">显示名称</div><div class="r" style="left:1018px;top:430px;width:1521px;height:50px;border:1px solid #dcdfe6;border-radius:7px;background:#fff"></div><div class="t" style="top:440.50px;font-size:21.7px;line-height:32px;color:#303133;left:1036.5px;">测试多选</div><div class="t" style="top:490.60px;font-size:25.2px;line-height:36px;color:#606266;right:1928.5px;">名称</div><div class="r" style="left:1018px;top:489.2px;width:1521px;height:50.6px;border:1px solid #dcdfe6;border-radius:7px;background:#fff"></div><div class="t" style="top:498.70px;font-size:21.7px;line-height:32px;color:#303133;left:1037.2px;">aaa</div><div class="t" style="top:550.40px;font-size:25.2px;line-height:36px;color:#606266;right:1928.5px;">数据库表</div><div class="r" style="left:1018px;top:549px;width:1521px;height:50px;border:1px solid #dcdfe6;border-radius:7px;background:#fff"></div><div class="t" style="top:558.50px;font-size:21.7px;line-height:32px;color:#303133;left:1037.2px;">aaaa</div><div class="t" style="top:620.80px;font-size:25.15px;line-height:36px;color:#606266;left:855px;">显示数据库属性</div><div class="r" style="left:1045px;top:626px;width:25px;height:25px;border:1px solid #dcdfe6;border-radius:4px;background:#fff"></div><svg class="ic" style="left:1955px;top:618px" width="40" height="40" viewBox="1955 618 40 40" fill="none"><g stroke="#5a9cf8" stroke-width="2.0" stroke-linecap="round" stroke-linejoin="round"><path d="M1961.2 634 V631.9 C1961.2 630.9 1961.8 630 1962.6 629.5 L1973.5 623.2 C1974.4 622.7 1975.4 622.7 1976.3 623.2 L1987.2 629.5 C1988 630 1988.6 630.9 1988.6 631.9 V636.9"/><path d="M1988.6 643.7 V644.1 C1988.6 645.1 1988 646 1987.2 646.5 L1976.3 652.8 C1975.4 653.3 1974.4 653.3 1973.5 652.8 L1962.6 646.5 C1961.8 646 1961.2 645.1 1961.2 644.1 V639.6"/></g><circle cx="1961.3" cy="636.8" r="2.1" fill="#5a9cf8"/><circle cx="1988.9" cy="640.2" r="2.1" fill="#5a9cf8"/><text x="1974.6" y="644" font-size="16.6" font-weight="400" text-anchor="middle" fill="#5a9cf8" stroke="#5a9cf8" stroke-width="0.5" font-family="Liberation Sans, sans-serif">AI</text></svg><svg class="ic" style="left:2015px;top:618px" width="40" height="40" viewBox="2015 618 40 40" fill="none"><g stroke="#5a9cf8" stroke-width="2.0" stroke-linecap="round" stroke-linejoin="round"><path d="M2028.6 627.2 H2025.8 C2023.3 627.2 2021.3 629.2 2021.3 631.7 V648.3 C2021.3 650.8 2023.3 652.8 2025.8 652.8 H2042.3 C2044.8 652.8 2046.8 650.8 2046.8 648.3 V635.4"/><path d="M2034.1 627.2 V646.8"/><path d="M2027.4 640.4 L2034.1 647.1 L2040.8 640.4"/><path d="M2045.4 623.8 V633"/><path d="M2040.8 628.4 H2050"/></g></svg><svg class="ic" style="left:2078px;top:618px" width="38" height="40" viewBox="2078 618 38 40" fill="none"><g stroke="#5a9cf8" stroke-width="2.0" stroke-linecap="butt" stroke-linejoin="round"><path d="M2082.7 628.6 H2110.6"/><path d="M2092.9 628.4 V625.3 H2100.4 V628.4"/><path d="M2086.5 628.6 V650.4 H2106.2 V628.6"/><path d="M2093.1 634.6 V645" stroke-linecap="round"/><path d="M2099.5 634.6 V645" stroke-linecap="round"/></g></svg><svg class="ic" style="left:2140px;top:618px" width="34" height="40" viewBox="2140 618 34 40" fill="none"><g stroke="#5a9cf8" stroke-width="2.0" stroke-linecap="butt" stroke-linejoin="round"><rect x="2146.4" y="625.1" width="21.5" height="25.3"/><path d="M2151.4 632.7 H2156.8"/><path d="M2151.4 638.6 H2163"/><path d="M2151.4 644.9 H2163"/></g></svg><svg class="ic" style="left:2200px;top:618px" width="38" height="40" viewBox="2200 618 38 40" fill="none"><g stroke="#5a9cf8" stroke-width="2.0" stroke-linecap="butt" stroke-linejoin="round"><rect x="2205.3" y="631" width="19.1" height="19.4"/><path d="M2212.5 630.4 V627.7 H2230.8 V647.3 H2228"/><path d="M2210.2 638 H2219.5"/><path d="M2210.2 644 H2219.5"/></g></svg><svg class="ic" style="left:2260px;top:618px" width="38" height="40" viewBox="2260 618 38 40" fill="none"><g stroke="#5a9cf8" stroke-width="2.0" stroke-linecap="butt" stroke-linejoin="round"><path d="M2266 627.2 H2274.2 L2278.2 631.6 H2291.4 V648.9 H2266 Z"/><path d="M2278.8 635.2 V644.8"/><path d="M2274 640 H2283.6"/></g></svg><svg class="ic" style="left:2322px;top:618px" width="36" height="40" viewBox="2322 618 36 40" fill="none"><g stroke="#5a9cf8" stroke-width="2.0" stroke-linecap="butt" stroke-linejoin="round"><path d="M2328.3 626 H2350.2"/><path d="M2339.2 630.4 V651.7"/><path d="M2328.9 640.7 L2339.2 630.4 L2349.6 640.7"/></g></svg><svg class="ic" style="left:2384px;top:618px" width="36" height="40" viewBox="2384 618 36 40" fill="none"><g stroke="#5a9cf8" stroke-width="2.0" stroke-linecap="butt" stroke-linejoin="round"><path d="M2388.6 649 H2412.1"/><path d="M2400.3 625.7 V642.8"/><path d="M2391.3 633.5 L2400.3 642.8 L2409.6 633.5"/></g></svg><svg class="ic" style="left:2446px;top:618px" width="32" height="40" viewBox="2446 618 32 40" fill="none"><g stroke="#5a9cf8" stroke-width="2.0" stroke-linecap="butt" stroke-linejoin="round"><path d="M2462.1 625.9 V647.8"/><path d="M2453.5 635 L2462.1 625.8 L2471 635"/></g></svg><svg class="ic" style="left:2506px;top:618px" width="32" height="40" viewBox="2506 618 32 40" fill="none"><g stroke="#5a9cf8" stroke-width="2.0" stroke-linecap="butt" stroke-linejoin="round"><path d="M2521.9 626.3 V649.8"/><path d="M2512.6 640.2 L2521.9 649.9 L2531.3 640.2"/></g></svg><div class="r" style="left:847px;top:668px;width:1692px;height:120px;background:#f7f7f8;"></div><div class="r" style="left:847px;top:667.7px;width:1692px;height:1.7px;background:#e3e4e8;"></div><div class="r" style="left:846.8px;top:668px;width:1.7px;height:629px;background:#e3e4e8;"></div><div class="r" style="left:2537.5px;top:668px;width:1.7px;height:629px;background:#e3e4e8;"></div><div class="r" style="left:847px;top:1295.5px;width:1692px;height:2.4px;background:#e3e4e8;"></div><div class="r" style="left:916.9px;top:726.9px;width:1618.6999999999998px;height:1.9px;background:#e3e4e8;"></div><div class="r" style="left:847px;top:787.6px;width:1692px;height:2px;background:#e3e4e8;"></div><div class="r" style="left:916.9px;top:668px;width:1.8px;height:629px;background:#e3e4e8;"></div><div class="r" style="left:1238.7px;top:728px;width:1.8px;height:569px;background:#e3e4e8;"></div><div class="r" style="left:1563.3px;top:728px;width:1.8px;height:569px;background:#e3e4e8;"></div><div class="r" style="left:1887.4px;top:728px;width:1.8px;height:569px;background:#e3e4e8;"></div><div class="r" style="left:2211.8px;top:728px;width:1.8px;height:569px;background:#e3e4e8;"></div><div class="r" style="left:2535.6px;top:668px;width:1.4px;height:629px;background:#e3e4e8;"></div><div class="t" style="top:706.30px;font-size:25.2px;line-height:36px;color:#5a5d63;left:683.2px;font-weight:700;width:400px;text-align:center;-webkit-text-stroke:1.1px #5a5d63;transform:scaleX(1.17);">#</div><div class="t" style="top:676.00px;font-size:25.2px;line-height:36px;color:#5a5d63;left:1528.5px;font-weight:700;width:400px;text-align:center;">实体属性</div><div class="t" style="top:737.00px;font-size:25.2px;line-height:36px;color:#5a5d63;left:881.8px;font-weight:700;width:400px;text-align:center;">名称</div><div class="t" style="top:737.00px;font-size:25.2px;line-height:36px;color:#5a5d63;left:1202.2px;font-weight:700;width:400px;text-align:center;">显示名称</div><div class="t" style="top:737.00px;font-size:25.2px;line-height:36px;color:#5a5d63;left:1526.6499999999999px;font-weight:700;width:400px;text-align:center;">数据类型</div><div class="t" style="top:737.00px;font-size:25.2px;line-height:36px;color:#5a5d63;left:1850.8000000000002px;font-weight:700;width:400px;text-align:center;">显示控件</div><div class="t" style="top:737.00px;font-size:25.2px;line-height:36px;color:#5a5d63;left:2174.7px;font-weight:700;width:400px;text-align:center;">描述</div><div class="r" id="tbody" style="left:847px;top:789.3px;width:1692px;height:507.70000000000005px;overflow:hidden"><div class="r" style="left:-847px;top:-789.3px;width:0;height:0"><div class="t" style="top:780.40px;font-size:26.4px;line-height:36px;color:#606266;left:782px;width:200px;text-align:center;">5</div><div class="t" style="top:783.80px;font-size:26.6px;line-height:36px;color:#606266;left:923.5px;">id</div><div class="t" style="top:786.30px;font-size:21.6px;line-height:30px;color:#303133;left:1593px;">String</div><svg class="ic" style="left:1836px;top:795.0px" width="19" height="11" viewBox="0 0 19 11" fill="none" ><path d="M0.8 0.8 L9.5 9.8 L18.2 0.8" stroke="#a8abb2" stroke-width="1.5" fill="none"/></svg><div class="t" style="top:787.60px;font-size:21.65px;line-height:30px;color:#a8abb2;left:1908.3px;">请选择</div><svg class="ic" style="left:2151px;top:795.0px" width="19" height="11" viewBox="0 0 19 11" fill="none" ><path d="M0.8 0.8 L9.5 9.8 L18.2 0.8" stroke="#a8abb2" stroke-width="1.5" fill="none"/></svg><div class="r" style="left:847px;top:825.65px;width:1692px;height:1.9px;background:#e3e4e8;"></div><div class="t" style="top:832.50px;font-size:26.4px;line-height:36px;color:#606266;left:782px;width:200px;text-align:center;">6</div><div class="t" style="top:835.85px;font-size:26.6px;line-height:36px;color:#606266;left:923.5px;">date</div><div class="t" style="top:836.45px;font-size:25.2px;line-height:36px;color:#606266;left:1245.5px;">日期</div><div class="t" style="top:838.35px;font-size:21.6px;line-height:30px;color:#303133;left:1593px;">Date</div><svg class="ic" style="left:1836px;top:847.05px" width="19" height="11" viewBox="0 0 19 11" fill="none" ><path d="M0.8 0.8 L9.5 9.8 L18.2 0.8" stroke="#a8abb2" stroke-width="1.5" fill="none"/></svg><div class="t" style="top:839.65px;font-size:21.65px;line-height:30px;color:#303133;left:1908.3px;">日期选择</div><svg class="ic" style="left:2151px;top:847.05px" width="19" height="11" viewBox="0 0 19 11" fill="none" ><path d="M0.8 0.8 L9.5 9.8 L18.2 0.8" stroke="#a8abb2" stroke-width="1.5" fill="none"/></svg><div class="t" style="top:836.45px;font-size:25.2px;line-height:36px;color:#606266;left:2218px;">日期</div><div class="r" style="left:847px;top:877.65px;width:1692px;height:1.9px;background:#e3e4e8;"></div><div class="t" style="top:884.60px;font-size:26.4px;line-height:36px;color:#606266;left:782px;width:200px;text-align:center;">7</div><div class="t" style="top:887.90px;font-size:26.6px;line-height:36px;color:#606266;left:923.5px;">matters</div><div class="t" style="top:888.50px;font-size:25.2px;line-height:36px;color:#606266;left:1245.5px;">物料多选</div><div class="t" style="top:890.40px;font-size:21.6px;line-height:30px;color:#303133;left:1593px;">String</div><svg class="ic" style="left:1836px;top:899.1px" width="19" height="11" viewBox="0 0 19 11" fill="none" ><path d="M0.8 0.8 L9.5 9.8 L18.2 0.8" stroke="#a8abb2" stroke-width="1.5" fill="none"/></svg><div class="t" style="top:891.70px;font-size:21.65px;line-height:30px;color:#303133;left:1908.3px;">下拉选择</div><svg class="ic" style="left:2144.5px;top:899.1px" width="19" height="11" viewBox="0 0 19 11" fill="none" ><path d="M0.8 0.8 L9.5 9.8 L18.2 0.8" stroke="#a8abb2" stroke-width="1.5" fill="none"/></svg><svg class="ic" style="left:2185.90px;top:892.90px" width="24" height="24" viewBox="2185.90 892.90 24 24" fill="none"><path d="M2206.77 902.45 L2206.77 907.35 L2204.62 907.74 L2203.72 909.30 L2204.46 911.35 L2200.21 913.81 L2198.80 912.14 L2197.00 912.14 L2195.59 913.81 L2191.34 911.35 L2192.08 909.30 L2191.18 907.74 L2189.03 907.35 L2189.03 902.45 L2191.18 902.06 L2192.08 900.50 L2191.34 898.45 L2195.59 895.99 L2197.00 897.66 L2198.80 897.66 L2200.21 895.99 L2204.46 898.45 L2203.72 900.50 L2204.62 902.06 Z" stroke="#4a90f0" stroke-width="1.4" stroke-linejoin="round"/><circle cx="2197.9" cy="904.9" r="4.3" stroke="#4a90f0" stroke-width="1.4"/></svg><div class="t" style="top:888.50px;font-size:25.2px;line-height:36px;color:#606266;left:2218px;">物料多选</div><div class="r" style="left:847px;top:931.05px;width:1692px;height:1.9px;background:#e3e4e8;"></div><div class="t" style="top:936.70px;font-size:26.4px;line-height:36px;color:#606266;left:782px;width:200px;text-align:center;">8</div><div class="t" style="top:939.95px;font-size:26.6px;line-height:36px;color:#606266;left:923.5px;">matter</div><div class="t" style="top:940.55px;font-size:25.2px;line-height:36px;color:#606266;left:1245.5px;">物料单选</div><div class="t" style="top:942.45px;font-size:21.6px;line-height:30px;color:#303133;left:1593px;">String</div><svg class="ic" style="left:1836px;top:951.15px" width="19" height="11" viewBox="0 0 19 11" fill="none" ><path d="M0.8 0.8 L9.5 9.8 L18.2 0.8" stroke="#a8abb2" stroke-width="1.5" fill="none"/></svg><div class="t" style="top:943.75px;font-size:21.65px;line-height:30px;color:#303133;left:1908.3px;">下拉选择</div><svg class="ic" style="left:2144.5px;top:951.15px" width="19" height="11" viewBox="0 0 19 11" fill="none" ><path d="M0.8 0.8 L9.5 9.8 L18.2 0.8" stroke="#a8abb2" stroke-width="1.5" fill="none"/></svg><svg class="ic" style="left:2185.90px;top:944.95px" width="24" height="24" viewBox="2185.90 944.95 24 24" fill="none"><path d="M2206.77 954.50 L2206.77 959.40 L2204.62 959.79 L2203.72 961.35 L2204.46 963.40 L2200.21 965.86 L2198.80 964.19 L2197.00 964.19 L2195.59 965.86 L2191.34 963.40 L2192.08 961.35 L2191.18 959.79 L2189.03 959.40 L2189.03 954.50 L2191.18 954.11 L2192.08 952.55 L2191.34 950.50 L2195.59 948.04 L2197.00 949.71 L2198.80 949.71 L2200.21 948.04 L2204.46 950.50 L2203.72 952.55 L2204.62 954.11 Z" stroke="#4a90f0" stroke-width="1.4" stroke-linejoin="round"/><circle cx="2197.9" cy="956.9499999999999" r="4.3" stroke="#4a90f0" stroke-width="1.4"/></svg><div class="t" style="top:940.55px;font-size:25.2px;line-height:36px;color:#606266;left:2218px;">物料单选</div><div class="r" style="left:847px;top:982.4499999999999px;width:1692px;height:1.9px;background:#e3e4e8;"></div><div class="t" style="top:988.80px;font-size:26.4px;line-height:36px;color:#606266;left:782px;width:200px;text-align:center;">9</div><div class="t" style="top:992.00px;font-size:26.6px;line-height:36px;color:#606266;left:923.5px;">dict</div><div class="t" style="top:992.60px;font-size:25.2px;line-height:36px;color:#606266;left:1245.5px;">业务字典单选</div><div class="t" style="top:994.50px;font-size:21.6px;line-height:30px;color:#303133;left:1593px;">String</div><svg class="ic" style="left:1836px;top:1003.2px" width="19" height="11" viewBox="0 0 19 11" fill="none" ><path d="M0.8 0.8 L9.5 9.8 L18.2 0.8" stroke="#a8abb2" stroke-width="1.5" fill="none"/></svg><div class="t" style="top:995.80px;font-size:21.65px;line-height:30px;color:#303133;left:1908.3px;">下拉选择</div><svg class="ic" style="left:2144.5px;top:1003.2px" width="19" height="11" viewBox="0 0 19 11" fill="none" ><path d="M0.8 0.8 L9.5 9.8 L18.2 0.8" stroke="#a8abb2" stroke-width="1.5" fill="none"/></svg><svg class="ic" style="left:2185.90px;top:997.00px" width="24" height="24" viewBox="2185.90 997.00 24 24" fill="none"><path d="M2206.77 1006.55 L2206.77 1011.45 L2204.62 1011.84 L2203.72 1013.40 L2204.46 1015.45 L2200.21 1017.91 L2198.80 1016.24 L2197.00 1016.24 L2195.59 1017.91 L2191.34 1015.45 L2192.08 1013.40 L2191.18 1011.84 L2189.03 1011.45 L2189.03 1006.55 L2191.18 1006.16 L2192.08 1004.60 L2191.34 1002.55 L2195.59 1000.09 L2197.00 1001.76 L2198.80 1001.76 L2200.21 1000.09 L2204.46 1002.55 L2203.72 1004.60 L2204.62 1006.16 Z" stroke="#4a90f0" stroke-width="1.4" stroke-linejoin="round"/><circle cx="2197.9" cy="1009.0" r="4.3" stroke="#4a90f0" stroke-width="1.4"/></svg><div class="t" style="top:992.60px;font-size:25.2px;line-height:36px;color:#606266;left:2218px;">业务字典单选</div><div class="r" style="left:847px;top:1034.55px;width:1692px;height:1.9px;background:#e3e4e8;"></div><div class="t" style="top:1040.90px;font-size:26.4px;line-height:36px;color:#606266;left:782px;width:200px;text-align:center;">10</div><div class="t" style="top:1044.05px;font-size:26.6px;line-height:36px;color:#606266;left:923.5px;">dicts</div><div class="t" style="top:1044.65px;font-size:25.2px;line-height:36px;color:#606266;left:1245.5px;">业务字典多选</div><div class="t" style="top:1046.55px;font-size:21.6px;line-height:30px;color:#303133;left:1593px;">String</div><svg class="ic" style="left:1836px;top:1055.25px" width="19" height="11" viewBox="0 0 19 11" fill="none" ><path d="M0.8 0.8 L9.5 9.8 L18.2 0.8" stroke="#a8abb2" stroke-width="1.5" fill="none"/></svg><div class="t" style="top:1047.85px;font-size:21.65px;line-height:30px;color:#303133;left:1908.3px;">下拉选择</div><svg class="ic" style="left:2144.5px;top:1055.25px" width="19" height="11" viewBox="0 0 19 11" fill="none" ><path d="M0.8 0.8 L9.5 9.8 L18.2 0.8" stroke="#a8abb2" stroke-width="1.5" fill="none"/></svg><svg class="ic" style="left:2185.90px;top:1049.05px" width="24" height="24" viewBox="2185.90 1049.05 24 24" fill="none"><path d="M2206.77 1058.60 L2206.77 1063.50 L2204.62 1063.89 L2203.72 1065.45 L2204.46 1067.50 L2200.21 1069.96 L2198.80 1068.29 L2197.00 1068.29 L2195.59 1069.96 L2191.34 1067.50 L2192.08 1065.45 L2191.18 1063.89 L2189.03 1063.50 L2189.03 1058.60 L2191.18 1058.21 L2192.08 1056.65 L2191.34 1054.60 L2195.59 1052.14 L2197.00 1053.81 L2198.80 1053.81 L2200.21 1052.14 L2204.46 1054.60 L2203.72 1056.65 L2204.62 1058.21 Z" stroke="#4a90f0" stroke-width="1.4" stroke-linejoin="round"/><circle cx="2197.9" cy="1061.05" r="4.3" stroke="#4a90f0" stroke-width="1.4"/></svg><div class="t" style="top:1044.65px;font-size:25.2px;line-height:36px;color:#606266;left:2218px;">业务字典多选</div><div class="r" style="left:848.4px;top:1088.8px;width:1689.2px;height:50.59999999999991px;background:#f5f7fa;"></div><div class="r" style="left:919.3px;top:1090.6px;width:318.4000000000001px;height:46.59999999999991px;background:#fff;border-radius:3px;"></div><div class="r" style="left:1241.1000000000001px;top:1090.6px;width:321.19999999999993px;height:46.59999999999991px;background:#fff;border-radius:3px;"></div><div class="r" style="left:2214.2000000000003px;top:1090.6px;width:320.39999999999975px;height:46.59999999999991px;background:#fff;border-radius:3px;"></div><div class="r" style="left:1574px;top:1091.0px;width:303px;height:45.99999999999991px;border-radius:7px;background:#fff"></div><div class="r" style="left:1890px;top:1091.0px;width:302px;height:45.99999999999991px;border-radius:7px;background:#fff"></div><div class="r" style="left:847px;top:1087.05px;width:1692px;height:1.9px;background:#e3e4e8;"></div><div class="t" style="top:1093.00px;font-size:26.4px;line-height:36px;color:#606266;left:782px;width:200px;text-align:center;">11</div><div class="t" style="top:1096.10px;font-size:26.6px;line-height:36px;color:#606266;left:923.5px;">org</div><div class="t" style="top:1096.70px;font-size:25.2px;line-height:36px;color:#606266;left:1245.5px;">机构单选</div><div class="t" style="top:1098.60px;font-size:21.6px;line-height:30px;color:#303133;left:1593px;">String</div><svg class="ic" style="left:1836px;top:1107.3px" width="19" height="11" viewBox="0 0 19 11" fill="none" ><path d="M0.8 0.8 L9.5 9.8 L18.2 0.8" stroke="#a8abb2" stroke-width="1.5" fill="none"/></svg><div class="t" style="top:1099.90px;font-size:21.65px;line-height:30px;color:#303133;left:1908.3px;">机构选择</div><svg class="ic" style="left:2151px;top:1107.3px" width="19" height="11" viewBox="0 0 19 11" fill="none" ><path d="M0.8 0.8 L9.5 9.8 L18.2 0.8" stroke="#a8abb2" stroke-width="1.5" fill="none"/></svg><div class="t" style="top:1096.70px;font-size:25.2px;line-height:36px;color:#606266;left:2218px;">机构单选</div><div class="r" style="left:847px;top:1138.6499999999999px;width:1692px;height:1.9px;background:#e3e4e8;"></div><div class="t" style="top:1145.10px;font-size:26.4px;line-height:36px;color:#606266;left:782px;width:200px;text-align:center;">12</div><div class="t" style="top:1148.15px;font-size:26.6px;line-height:36px;color:#606266;left:923.5px;">orgs</div><div class="t" style="top:1148.75px;font-size:25.2px;line-height:36px;color:#606266;left:1245.5px;">机构多选</div><div class="t" style="top:1150.65px;font-size:21.6px;line-height:30px;color:#303133;left:1593px;">String</div><svg class="ic" style="left:1836px;top:1159.35px" width="19" height="11" viewBox="0 0 19 11" fill="none" ><path d="M0.8 0.8 L9.5 9.8 L18.2 0.8" stroke="#a8abb2" stroke-width="1.5" fill="none"/></svg><div class="t" style="top:1151.95px;font-size:21.65px;line-height:30px;color:#303133;left:1908.3px;">机构选择</div><svg class="ic" style="left:2151px;top:1159.35px" width="19" height="11" viewBox="0 0 19 11" fill="none" ><path d="M0.8 0.8 L9.5 9.8 L18.2 0.8" stroke="#a8abb2" stroke-width="1.5" fill="none"/></svg><div class="t" style="top:1148.75px;font-size:25.2px;line-height:36px;color:#606266;left:2218px;">机构多选</div><div class="r" style="left:847px;top:1190.6499999999999px;width:1692px;height:1.9px;background:#e3e4e8;"></div><div class="t" style="top:1197.20px;font-size:26.4px;line-height:36px;color:#606266;left:782px;width:200px;text-align:center;">13</div><div class="t" style="top:1200.20px;font-size:26.6px;line-height:36px;color:#606266;left:923.5px;">person</div><div class="t" style="top:1200.80px;font-size:25.2px;line-height:36px;color:#606266;left:1245.5px;">人员单选</div><div class="t" style="top:1202.70px;font-size:21.6px;line-height:30px;color:#303133;left:1593px;">String</div><svg class="ic" style="left:1836px;top:1211.3999999999999px" width="19" height="11" viewBox="0 0 19 11" fill="none" ><path d="M0.8 0.8 L9.5 9.8 L18.2 0.8" stroke="#a8abb2" stroke-width="1.5" fill="none"/></svg><div class="t" style="top:1204.00px;font-size:21.65px;line-height:30px;color:#303133;left:1908.3px;">人员选择</div><svg class="ic" style="left:2151px;top:1211.3999999999999px" width="19" height="11" viewBox="0 0 19 11" fill="none" ><path d="M0.8 0.8 L9.5 9.8 L18.2 0.8" stroke="#a8abb2" stroke-width="1.5" fill="none"/></svg><div class="t" style="top:1200.80px;font-size:25.2px;line-height:36px;color:#606266;left:2218px;">人员单选</div><div class="r" style="left:847px;top:1244.6499999999999px;width:1692px;height:1.9px;background:#e3e4e8;"></div><div class="t" style="top:1249.30px;font-size:26.4px;line-height:36px;color:#606266;left:782px;width:200px;text-align:center;">14</div><div class="t" style="top:1252.25px;font-size:26.6px;line-height:36px;color:#606266;left:923.5px;">persons</div><div class="t" style="top:1252.85px;font-size:25.2px;line-height:36px;color:#606266;left:1245.5px;">人员多选</div><div class="t" style="top:1254.75px;font-size:21.6px;line-height:30px;color:#303133;left:1593px;">String</div><svg class="ic" style="left:1836px;top:1263.45px" width="19" height="11" viewBox="0 0 19 11" fill="none" ><path d="M0.8 0.8 L9.5 9.8 L18.2 0.8" stroke="#a8abb2" stroke-width="1.5" fill="none"/></svg><div class="t" style="top:1256.05px;font-size:21.65px;line-height:30px;color:#303133;left:1908.3px;">人员选择</div><svg class="ic" style="left:2151px;top:1263.45px" width="19" height="11" viewBox="0 0 19 11" fill="none" ><path d="M0.8 0.8 L9.5 9.8 L18.2 0.8" stroke="#a8abb2" stroke-width="1.5" fill="none"/></svg><div class="t" style="top:1252.85px;font-size:25.2px;line-height:36px;color:#606266;left:2218px;">人员多选</div><div class="r" style="left:916.9px;top:780px;width:1.8px;height:600px;background:#e3e4e8;"></div><div class="r" style="left:1238.7px;top:780px;width:1.8px;height:600px;background:#e3e4e8;"></div><div class="r" style="left:1563.3px;top:780px;width:1.8px;height:600px;background:#e3e4e8;"></div><div class="r" style="left:1887.4px;top:780px;width:1.8px;height:600px;background:#e3e4e8;"></div><div class="r" style="left:2211.8px;top:780px;width:1.8px;height:600px;background:#e3e4e8;"></div><div class="r" style="left:2535.6px;top:780px;width:1.4px;height:600px;background:#e3e4e8;"></div></div></div><div class="r" style="left:1895.2px;top:728.6px;width:322.6px;height:562.4px;border:6.3px solid #e8391f;border-radius:12px"></div><div class="r" style="left:840px;top:1300px;width:1700px;height:29.8px;overflow:hidden"><div class="t" style="left:9px;top:21px;font-size:25.2px;line-height:36px;color:#606266">显示名称</div><div class="r" style="left:116px;top:16px;width:303px;height:50px;border:1px solid #dcdfe6;border-radius:7px;background:#fff"></div></div><div class="r" style="left:2296px;top:1348px;width:100px;height:49px;border:1px solid #dcdfe6;border-radius:7px;background:#fff"></div><div class="t" style="top:1356.80px;font-size:21.4px;line-height:32px;color:#606266;left:2296px;width:100px;text-align:center;-webkit-text-stroke:0.45px #606266;">取消</div><div class="r" style="left:2422px;top:1348px;width:99px;height:49px;border-radius:7px;background:#5a9cf8"></div><div class="t" style="top:1356.80px;font-size:21.4px;line-height:32px;color:#fff;left:2422px;font-weight:700;width:99px;text-align:center;">确定</div></div>
<div class="r" style="left:2852px;top:1299px;width:200px;height:83px;border-radius:41.5px;background:#e4e8f1;box-shadow:0 0 8px rgba(70,80,150,.45)"></div><div class="r" style="left:2866.8px;top:1313.2px;width:56.2px;height:56.2px;border-radius:50%;background:conic-gradient(from 0deg,#9a96f4 0deg,#52c2f0 45deg,#5296f4 90deg,#556ef0 135deg,#5f5af0 180deg,#7a5ff0 225deg,#a582f0 270deg,#b096f0 315deg,#9a96f4 360deg)"></div><div class="r" style="left:2870px;top:1316.4px;width:49.8px;height:49.8px;border-radius:50%;background:#eef0fb"></div><svg class="ic" style="left:2865px;top:1311.3px" width="60" height="60" viewBox="0 0 60 60" fill="none" ><text x="29.4" y="39.4" font-size="26" font-weight="700" font-style="italic" text-anchor="middle" fill="#4b64e6" stroke="#4b64e6" stroke-width="1.1" stroke-linejoin="round" font-family="Liberation Sans, sans-serif">Ai</text></svg>
</body>
</html>
